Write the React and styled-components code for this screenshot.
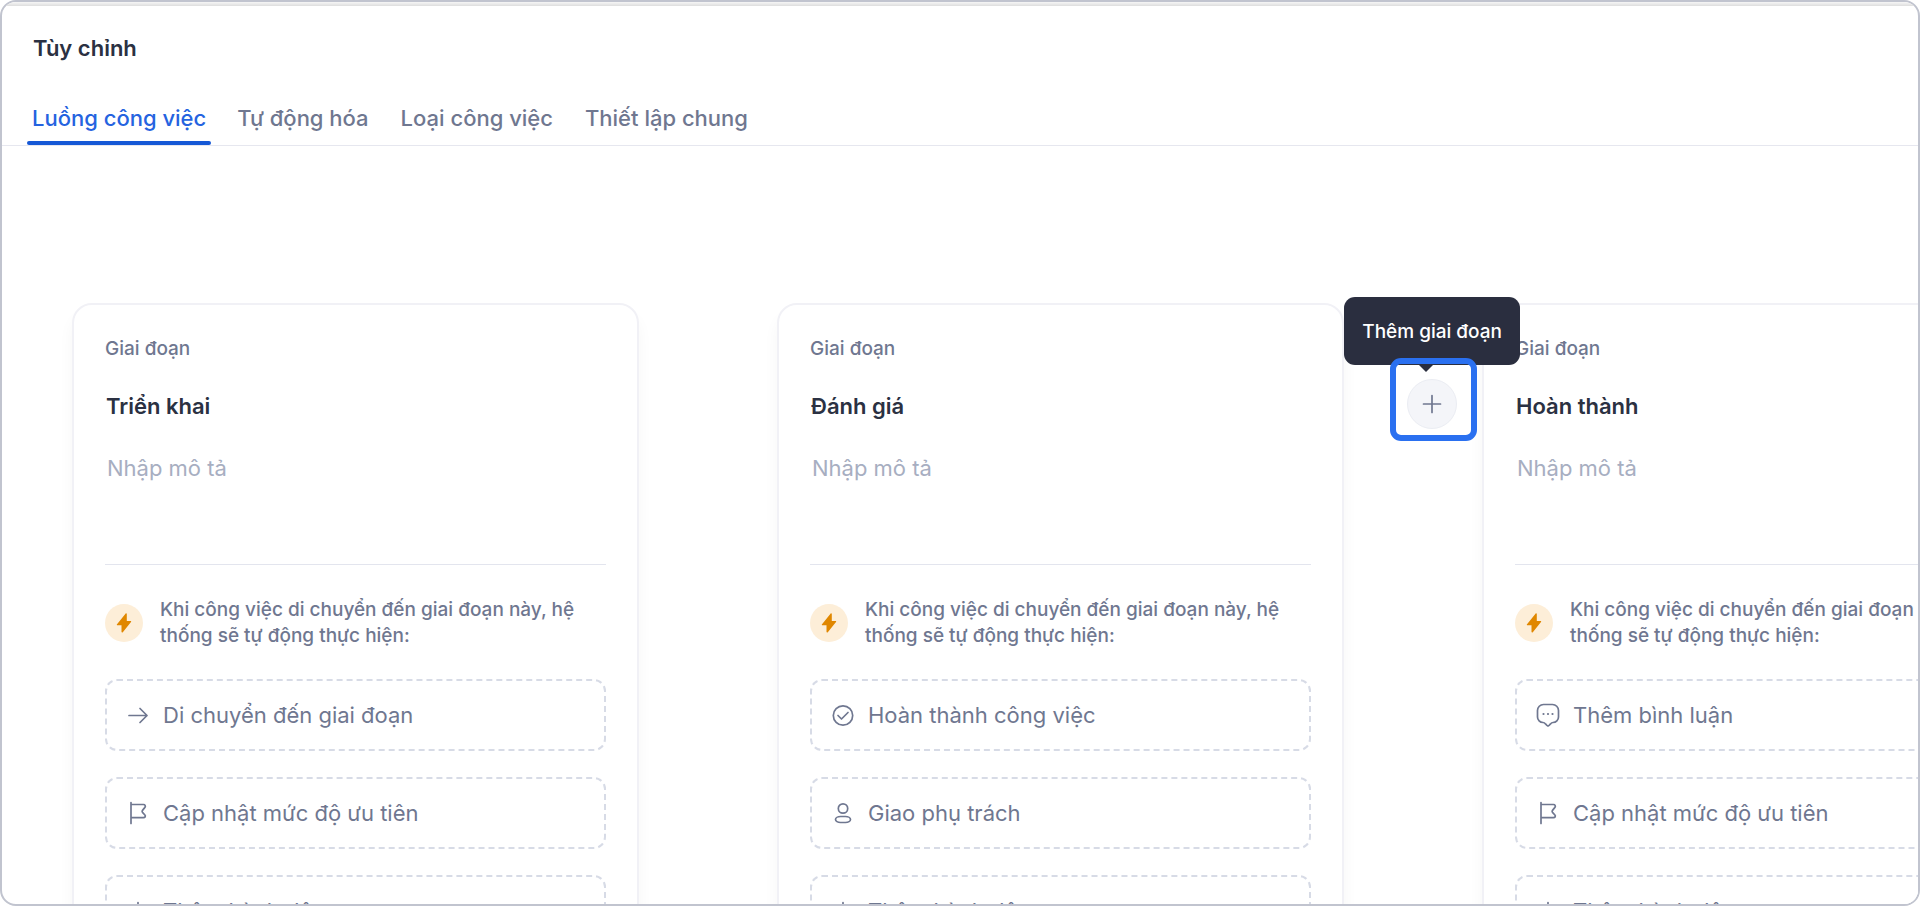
import React, { useState } from 'react';
import styled, { createGlobalStyle } from 'styled-components';

const TABS = ['Luồng công việc', 'Tự động hóa', 'Loại công việc', 'Thiết lập chung'];

const STAGES = [
    {
        id: 'deploy',
        name: 'Triển khai',
        actions: [
            { icon: 'arrow', label: 'Di chuyển đến giai đoạn' },
            { icon: 'flag', label: 'Cập nhật mức độ ưu tiên' },
            { icon: 'plus', label: 'Thêm hành động' },
        ],
    },
    {
        id: 'review',
        name: 'Đánh giá',
        actions: [
            { icon: 'check', label: 'Hoàn thành công việc' },
            { icon: 'user', label: 'Giao phụ trách' },
            { icon: 'plus', label: 'Thêm hành động' },
        ],
        addAfter: true,
    },
    {
        id: 'done',
        name: 'Hoàn thành',
        actions: [
            { icon: 'comment', label: 'Thêm bình luận' },
            { icon: 'flag', label: 'Cập nhật mức độ ưu tiên' },
            { icon: 'plus', label: 'Thêm hành động' },
        ],
    },
];

const ICONS = {
    arrow: <path d="M3 12.500h18M14 5.500l7 7-7 7"/>,
    flag: <path d="M5 1.500v21M5 3.500h12.500c1.600 0 2.400 1.700 1.400 2.900l-2.400 3a1.600 1.600 0 0 0 0 2l2.400 2.600c1 1.200.2 2.600-1.400 2.600H5"/>,
    plus: <path d="M12 3.500v17M3.500 12h17"/>,
    check: <><circle cx="12" cy="12.500" r="9.700"/><path d="M7 12.500l3.500 3.500 6.500-6.500"/></>,
    user: <><circle cx="12" cy="7.500" r="4.700"/><rect x="4.500" y="15.500" width="15" height="6" rx="5" ry="3"/></>,
    comment: (
        <>
            <path d="M7.500 1.500h9a6 6 0 0 1 6 6v6.500a5.500 5.500 0 0 1-5.500 5.500c-1.200 0-1.800.5-2.500 1.400l-1.500 1.600c-.6.6-1.400.6-2 0l-1.500-1.600c-.7-.9-1.300-1.400-2.500-1.400A5.500 5.500 0 0 1 1.500 14V7.500a6 6 0 0 1 6-6z"/>
            <path d="M7.500 11h.01M12 11h.01M16.500 11h.01" strokeWidth="2.200"/>
        </>
    ),
};

const Icon = ({ name }) => (
    <IconSvg viewBox="0 0 24 24" aria-hidden="true">{ICONS[name]}</IconSvg>
);

const Bolt = () => (
    <BoltBadge>
        <svg width="16" height="20" viewBox="0 0 16 20" aria-hidden="true">
            <path d="M9.500.7L1 11.200c-.4.500-.1 1 .5 1h4v6.600c0 .8.8 1 1.300.4L15 9c.4-.5.1-1.100-.5-1.100h-3.700V1.100c0-.8-.8-1-1.300-.4z" fill="#e08700"/>
        </svg>
    </BoltBadge>
);

const StageCard = ({ stage }) => (
    <Card>
        <StageLabel htmlFor={stage.id}>Giai đoạn</StageLabel>
        <StageName id={stage.id} defaultValue={stage.name}/>
        <Description aria-label="Mô tả" placeholder="Nhập mô tả"/>
        <Automation>
            <Bolt/>
            <span>Khi công việc di chuyển đến giai đoạn này, hệ thống sẽ tự động thực hiện:</span>
        </Automation>
        <Actions>
            {stage.actions.map(({ icon, label }) => (
                <ActionButton key={label} type="button">
                    <Icon name={icon}/>
                    {label}
                </ActionButton>
            ))}
        </Actions>
    </Card>
);

const App = () => {

    const [active, setActive] = useState(0);

    return (
        <Frame>
            <GlobalStyle/>
            <TopStrip/>
            <Header>
                <Title>Tùy chỉnh</Title>
                <Tabs>
                    {TABS.map((tab, i) => (
                        <Tab key={tab} type="button" $active={i === active} onClick={() => setActive(i)}>{tab}</Tab>
                    ))}
                </Tabs>
            </Header>
            <Board>
                {STAGES.map((stage, i) => (
                    <React.Fragment key={stage.id}>
                        {i > 0 && (
                            <Connector>
                                {STAGES[i - 1].addAfter && (
                                    <AddSpot>
                                        <Tooltip role="tooltip" id="add-tip">Thêm giai đoạn</Tooltip>
                                        <AddButton type="button" aria-describedby="add-tip" aria-label="Thêm giai đoạn">
                                            <Icon name="plus"/>
                                        </AddButton>
                                        <Highlight/>
                                    </AddSpot>
                                )}
                            </Connector>
                        )}
                        <StageCard stage={stage}/>
                    </React.Fragment>
                ))}
            </Board>
        </Frame>
    );
};

export default App;

const GlobalStyle = createGlobalStyle`
  * {
    box-sizing: border-box;
  }
  body {
    margin: 0;
    background: #ffffff;
    color: #6f7790;
    font-family: Inter, "Noto Sans", sans-serif;
  }
  button, input, textarea {
    font-family: inherit;
    margin: 0;
  }
`

const Frame = styled.main`
  height: 100vh;
  display: flex;
  flex-direction: column;
  overflow: hidden;
  border: 2px solid #c1c4cf;
  border-radius: 16px;
`

const TopStrip = styled.div`
  flex: none;
  height: 4px;
  background: linear-gradient(#f6f6f6, #dedede);
`

const Header = styled.header`
  flex: none;
  border-bottom: 1px solid #e6e7ef;
`

const Title = styled.h1`
  margin: 0;
  padding: 28px 31px 0;
  color: #2b3142;
  font-size: 22px;
  line-height: 28px;
  font-weight: 600;
`

const Tabs = styled.nav`
  display: flex;
  gap: 20px;
  padding: 34px 25px 0;
`

const Tab = styled.button`
  height: 49px;
  padding: 0 5px 5px;
  border: 0;
  background: none;
  color: ${({ $active }) => $active ? '#2563e0' : '#6f7790'};
  font-size: 22px;
  font-weight: 500;
  line-height: 28px;
  position: relative;
  cursor: pointer;
  &::after {
    content: '';
    display: ${({ $active }) => $active ? 'block' : 'none'};
    position: absolute;
    left: 0;
    right: 0;
    bottom: 0;
    height: 4px;
    border-radius: 2px;
    background: #1558d6;
  }
  &:not(:first-child) {
    padding: 0 6px 5px;
  }
`

const Board = styled.section`
  flex: 1;
  min-height: 0;
  display: flex;
  align-items: flex-start;
  padding: 157px 70px 0;
  overflow: hidden;
`

const Card = styled.article`
  flex: none;
  width: 567px;
  display: flex;
  flex-direction: column;
  padding: 32px 31px;
  border: 2px solid #f1f1f6;
  border-radius: 20px;
  background: #ffffff;
  box-shadow: 0 12px 16px rgba(20, 24, 40, 0.04);
`

const StageLabel = styled.label`
  font-size: 19px;
  line-height: 24px;
  font-weight: 500;
`

const StageName = styled.input`
  width: 100%;
  height: 36px;
  margin-top: 27px;
  padding: 0 1px;
  border: 0;
  outline: 0;
  background: none;
  color: #2b3142;
  font-size: 22px;
  font-weight: 600;
`

const Description = styled.textarea`
  height: 111px;
  margin-top: 30px;
  padding: 0 2px;
  border: 0;
  border-bottom: 1px solid #e3e5ee;
  outline: 0;
  resize: none;
  background: none;
  color: #2b3142;
  font-size: 22px;
  line-height: 28px;
  &::placeholder {
    color: #a7aec1;
    opacity: 1;
  }
`

const Automation = styled.div`
  display: flex;
  align-items: center;
  gap: 17px;
  padding: 32px 0 30px;
  font-size: 19px;
  line-height: 26px;
  font-weight: 500;
`

const BoltBadge = styled.span`
  flex: none;
  display: flex;
  align-items: center;
  justify-content: center;
  width: 38px;
  height: 38px;
  border-radius: 50%;
  background: #fdeed8;
`

const Actions = styled.div`
  display: flex;
  flex-direction: column;
  gap: 26px;
`

const ActionButton = styled.button`
  display: flex;
  align-items: center;
  gap: 13px;
  height: 72px;
  padding: 0 19px;
  border: 2px dashed #d7dbe6;
  border-radius: 12px;
  background: #ffffff;
  color: #6f7790;
  font-size: 22px;
  line-height: 28px;
  text-align: left;
  cursor: pointer;
`

const IconSvg = styled.svg`
  flex: none;
  width: 24px;
  height: 24px;
  fill: none;
  stroke: #6f7790;
  stroke-width: 1.7;
  stroke-linecap: round;
  stroke-linejoin: round;
`

const Connector = styled.div`
  flex: none;
  width: 138px;
  padding: 76px 25px 0 63px;
`

const AddSpot = styled.div`
  position: relative;
  width: 50px;
  height: 50px;
`

const AddButton = styled.button`
  display: flex;
  align-items: center;
  justify-content: center;
  width: 50px;
  height: 50px;
  padding: 0;
  border: 1px solid #ebedf3;
  border-radius: 50%;
  background: #f4f5f9;
  cursor: pointer;
`

const Tooltip = styled.div`
  position: absolute;
  right: -63px;
  bottom: 64px;
  z-index: 2;
  padding: 21px 18px 19px;
  border-radius: 11px;
  background: #2a2e3f;
  color: #ffffff;
  font-size: 19px;
  line-height: 28px;
  font-weight: 500;
  white-space: nowrap;
  &::after {
    content: '';
    position: absolute;
    top: 100%;
    left: 75px;
    border: 7px solid transparent;
    border-top-color: #2a2e3f;
    border-bottom: 0;
  }
`

const Highlight = styled.span`
  position: absolute;
  inset: -21px -20px -12px -17px;
  z-index: 3;
  border: 6px solid #2a70f0;
  border-radius: 11px;
  pointer-events: none;
`
